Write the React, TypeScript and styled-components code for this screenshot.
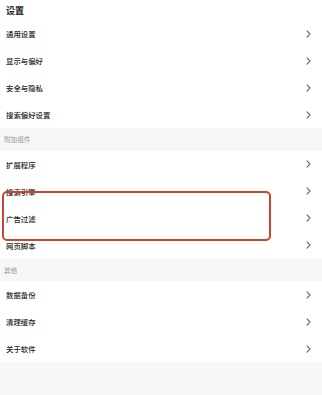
import React from "react";
import styled, { createGlobalStyle } from "styled-components";

const Global = createGlobalStyle`
  html, body { margin: 0; padding: 0; background: #ffffff; }
  body { font-family: "Noto Sans CJK SC", "Noto Sans", sans-serif; }
`;

const Page = styled.div`
  position: relative;
  width: 322px;
  height: 395px;
  display: flex;
  flex-direction: column;
  background: #f8f8f8;
  overflow: hidden;
`;

const Title = styled.div`
  height: 20px;
  flex: none;
  display: flex;
  align-items: center;
  padding-left: 6px;
  font-size: 9px;
  font-weight: 700;
  color: #1a1a1a;
  background: #ffffff;
`;

const Group = styled.div`
  display: flex;
  flex-direction: column;
  background: #ffffff;
  flex: none;
`;

const Row = styled.div`
  height: 27px;
  display: flex;
  align-items: center;
  justify-content: space-between;
  padding: 0 11px 0 6px;
  font-size: 7.4px;
  font-weight: 500;
  color: #262626;
`;

const SectionHeader = styled.div`
  height: 22.5px;
  flex: none;
  display: flex;
  align-items: center;
  padding-left: 4px;
  font-size: 6.6px;
  color: #999999;
  background: #f7f7f7;
`;

const Highlight = styled.div`
  position: absolute;
  left: 2px;
  top: 191px;
  width: 269px;
  height: 50px;
  box-sizing: border-box;
  border: 2px solid #cc4331;
  border-radius: 5px;
  pointer-events: none;
`;

const Chevron = () => (
  <svg width="5" height="8" viewBox="0 0 5 8">
    <polyline points="1,0.8 4,4 1,7.2" fill="none" stroke="#666666" strokeWidth="1.1" strokeLinejoin="round" strokeLinecap="round" />
  </svg>
);

const Item = ({ label }: { label: string }) => (
  <Row>
    <span>{label}</span>
    <Chevron />
  </Row>
);

export default function App() {
  return (
    <>
      <Global />
      <Page>
        <Title>设置</Title>
        <Group>
          <Item label="通用设置" />
          <Item label="显示与偏好" />
          <Item label="安全与隐私" />
          <Item label="搜索偏好设置" />
        </Group>
        <SectionHeader>附加组件</SectionHeader>
        <Group>
          <Item label="扩展程序" />
          <Item label="搜索引擎" />
          <Item label="广告过滤" />
          <Item label="网页脚本" />
        </Group>
        <SectionHeader>其他</SectionHeader>
        <Group>
          <Item label="数据备份" />
          <Item label="清理缓存" />
          <Item label="关于软件" />
        </Group>
        <Highlight />
      </Page>
    </>
  );
}
